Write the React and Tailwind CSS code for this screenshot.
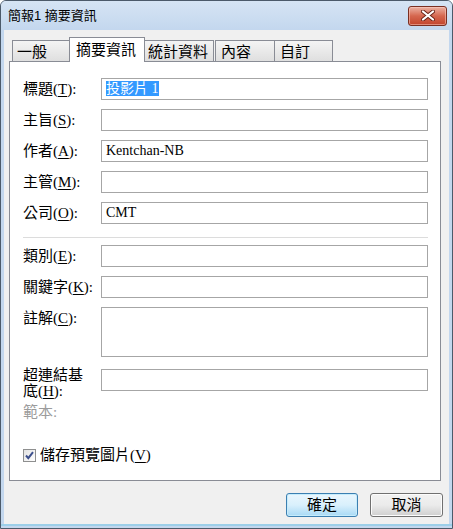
import React from 'react';

const serif = { fontFamily: '"Liberation Serif", "Noto Sans CJK TC", serif' };
const sans = { fontFamily: '"Liberation Sans", "Noto Sans CJK TC", sans-serif' };

const Key = ({ k }) => (
  <>
    (<span className="underline underline-offset-2">{k}</span>):
  </>
);

const Field = ({ label, k, value, selected, tall }) => (
  <div className="flex items-start">
    <div className="w-[78px] shrink-0 text-[15px] leading-[22px] text-black whitespace-nowrap">
      {label}
      <Key k={k} />
    </div>
    <div
      className={`w-[327px] ${tall ? 'h-[50px]' : 'h-[22px]'} border border-[#a6a6a6] bg-white pl-[4px] text-[14px] leading-[20px] text-black`}
    >
      {selected ? <span className="bg-[#3399ff] text-white">{value}</span> : value}
    </div>
  </div>
);

const Tab = ({ label, active, className = '' }) =>
  active ? (
    <div className={`relative z-10 h-[25px] mb-[-1px] bg-white border border-b-0 border-[#898c95] pl-[6px] text-[15px] leading-[24px] ${className}`}>
      {label}
    </div>
  ) : (
    <div className={`h-[21px] bg-gradient-to-b from-[#f4f4f4] to-[#dfdfdf] border border-b-0 border-[#898c95] pl-[3px] text-[15px] leading-[22px] ${className}`}>
      {label}
    </div>
  );

export default function App() {
  return (
    <div className="w-[453px] h-[529px] flex flex-col rounded-t-[6px] border border-[#4c5a6a] bg-[#c3d7ee] overflow-hidden" style={sans}>
      {/* title bar */}
      <div className="h-[29px] shrink-0 flex items-center justify-between pl-[7px] pr-[5px] bg-gradient-to-b from-[#d6e4f4] to-[#c3d7ee]">
        <span className="text-[13px] leading-[16px] text-black">簡報1 摘要資訊</span>
        <div className="w-[39px] h-[20px] rounded-[3px] border border-[#7a2f22] bg-gradient-to-b from-[#eab1a3] via-[#d5664e] to-[#c2442c] flex items-center justify-center shadow-[inset_0_0_0_1px_rgba(255,210,200,0.5)]">
          <svg width="14" height="11" viewBox="0 0 14 11">
            <path d="M2 1.5 L12 9.5 M12 1.5 L2 9.5" stroke="#6b2418" strokeWidth="4" strokeLinecap="round" />
            <path d="M2 1.5 L12 9.5 M12 1.5 L2 9.5" stroke="#ffffff" strokeWidth="2.2" strokeLinecap="round" />
          </svg>
        </div>
      </div>

      {/* client area */}
      <div className="mx-[3px] h-[494px] shrink-0 bg-[#f0f0f0] pl-[5px] pt-[7px]">
        <div className="flex items-end h-[24px] ml-[3px] text-black">
          <Tab label="一般" className="w-[57px] border-r-0 pl-[4px]" />
          <Tab label="摘要資訊" active className="w-[76px]" />
          <Tab label="統計資料" className="w-[69px] border-l-0" />
          <Tab label="內容" className="w-[60px] ml-[1px] pl-[5px]" />
          <Tab label="自訂" className="w-[58px] border-l-0 pl-[5px]" />
        </div>

        <div className="w-[432px] h-[420px] border border-[#898c95] bg-white flex flex-col pl-[13px] pr-[12px] pt-[16px]" style={serif}>
          <div className="flex flex-col gap-[9px]">
            <Field label="標題" k="T" value="投影片 1" selected />
            <Field label="主旨" k="S" value="" />
            <Field label="作者" k="A" value="Kentchan-NB" />
            <Field label="主管" k="M" value="" />
            <Field label="公司" k="O" value="CMT" />
          </div>
          <div className="mt-[13px] h-px bg-[#dcdcdc]" />
          <div className="mt-[7px] flex flex-col gap-[9px]">
            <Field label="類別" k="E" value="" />
            <Field label="關鍵字" k="K" value="" />
            <Field label="註解" k="C" value="" tall />
          </div>
          <div className="mt-[10px] flex items-start">
            <div className="w-[78px] shrink-0 text-[15px] leading-[16px] text-black">
              超連結基
              <br />
              底<Key k="H" />
            </div>
            <div className="mt-[2px] w-[327px] h-[22px] border border-[#a6a6a6] bg-white" />
          </div>
          <div className="mt-[5px] text-[15px] leading-[16px] text-[#9c9c9c]">範本:</div>
          <div className="mt-[28px] flex items-center h-[14px]">
            <div className="w-[13px] h-[13px] border border-[#8e8f8f] bg-gradient-to-br from-[#e2e2e2] to-[#ffffff] flex items-center justify-center">
              <svg width="11" height="11" viewBox="0 0 11 11">
                <path d="M2 5.5 L4.3 8.2 L9 2.2" fill="none" stroke="#3c4f8c" strokeWidth="2" />
              </svg>
            </div>
            <span className="ml-[4px] text-[15px] leading-[16px] text-black">
              儲存預覽圖片(<span className="underline underline-offset-2">V</span>)
            </span>
          </div>
        </div>

        <div className="mt-[12px] flex justify-end gap-[12px] pr-[6px]" style={sans}>
          <button className="w-[72px] h-[24px] rounded-[3px] border border-[#3c7fb1] bg-gradient-to-b from-[#eaf6fd] via-[#d9f0fc] to-[#a7d9f5] text-[15px] leading-[20px] text-black shadow-[inset_0_0_0_1px_#c6ecfc]">
            確定
          </button>
          <button className="w-[73px] h-[24px] rounded-[3px] border border-[#707070] bg-gradient-to-b from-[#f2f2f2] via-[#ebebeb] to-[#cfcfcf] text-[15px] leading-[20px] text-black shadow-[inset_0_0_0_1px_#fcfcfc]">
            取消
          </button>
        </div>
      </div>
      <div className="flex-1 border-t-[2px] border-[#9ccfe9]" />
    </div>
  );
}
